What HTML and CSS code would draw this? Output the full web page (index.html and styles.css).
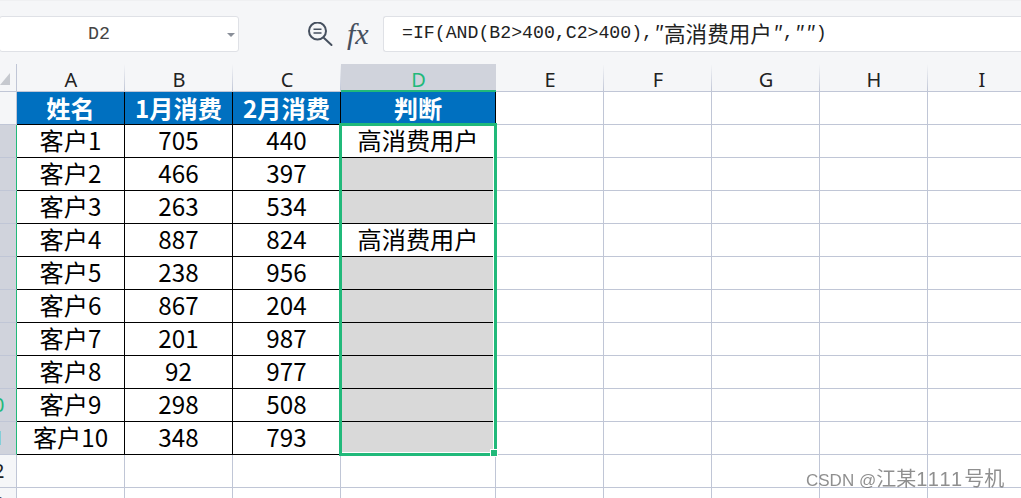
FILE: index.html
```html
<!DOCTYPE html>
<html lang="zh">
<head>
<meta charset="utf-8">
<title>高消费用户</title>
<link rel="stylesheet" href="styles.css">
</head>
<body>
<div class="toolbar">
  <div class="namebox"><span class="namebox-text">D2</span><span class="caret"></span></div>
  <div class="tools">
    <svg class="zoom-icon" width="26" height="26" viewBox="0 0 26 26" fill="none" stroke="#46505f" stroke-width="2"><circle cx="10.5" cy="9" r="8.5"/><path d="M6.5 7.2h8M6.5 11h8" stroke-width="1.5"/><path d="M17 16l7.5 7" stroke-linecap="round"/></svg>
    <span class="fx">fx</span>
  </div>
  <div class="formula">=IF(AND(B2&gt;400,C2&gt;400),<i class="q">"</i><span class="cjk">高消费用户</span><i class="q">"</i>,<i class="q">""</i>)</div>
</div>
<div class="sheet">
  <div class="grid">
    <div class="corner"><svg width="11" height="14" viewBox="0 0 11 14"><path d="M10 1v12H0z" fill="#c6c9cf"/></svg></div>
    <div class="col">A</div><div class="col">B</div><div class="col">C</div><div class="col col-sel">D</div><div class="col">E</div><div class="col">F</div><div class="col">G</div><div class="col">H</div><div class="col col-last">I</div>

    <div class="row"></div>
    <div class="cell data head">姓名</div><div class="cell data head">1月消费</div><div class="cell data head">2月消费</div><div class="cell data head">判断</div><div class="cell"></div><div class="cell"></div><div class="cell"></div><div class="cell"></div><div class="cell"></div>

    <div class="row row-sel"></div>
    <div class="cell data">客户1</div><div class="cell data">705</div><div class="cell data">440</div><div class="cell data">高消费用户</div><div class="cell"></div><div class="cell"></div><div class="cell"></div><div class="cell"></div><div class="cell"></div>

    <div class="row row-sel"></div>
    <div class="cell data">客户2</div><div class="cell data">466</div><div class="cell data">397</div><div class="cell data gray"></div><div class="cell"></div><div class="cell"></div><div class="cell"></div><div class="cell"></div><div class="cell"></div>

    <div class="row row-sel"></div>
    <div class="cell data">客户3</div><div class="cell data">263</div><div class="cell data">534</div><div class="cell data gray"></div><div class="cell"></div><div class="cell"></div><div class="cell"></div><div class="cell"></div><div class="cell"></div>

    <div class="row row-sel"></div>
    <div class="cell data">客户4</div><div class="cell data">887</div><div class="cell data">824</div><div class="cell data">高消费用户</div><div class="cell"></div><div class="cell"></div><div class="cell"></div><div class="cell"></div><div class="cell"></div>

    <div class="row row-sel"></div>
    <div class="cell data">客户5</div><div class="cell data">238</div><div class="cell data">956</div><div class="cell data gray"></div><div class="cell"></div><div class="cell"></div><div class="cell"></div><div class="cell"></div><div class="cell"></div>

    <div class="row row-sel"></div>
    <div class="cell data">客户6</div><div class="cell data">867</div><div class="cell data">204</div><div class="cell data gray"></div><div class="cell"></div><div class="cell"></div><div class="cell"></div><div class="cell"></div><div class="cell"></div>

    <div class="row row-sel"></div>
    <div class="cell data">客户7</div><div class="cell data">201</div><div class="cell data">987</div><div class="cell data gray"></div><div class="cell"></div><div class="cell"></div><div class="cell"></div><div class="cell"></div><div class="cell"></div>

    <div class="row row-sel"></div>
    <div class="cell data">客户8</div><div class="cell data">92</div><div class="cell data">977</div><div class="cell data gray"></div><div class="cell"></div><div class="cell"></div><div class="cell"></div><div class="cell"></div><div class="cell"></div>

    <div class="row row-sel"><span class="num num-sel">10</span></div>
    <div class="cell data">客户9</div><div class="cell data">298</div><div class="cell data">508</div><div class="cell data gray"></div><div class="cell"></div><div class="cell"></div><div class="cell"></div><div class="cell"></div><div class="cell"></div>

    <div class="row row-sel"><span class="num num-sel">11</span></div>
    <div class="cell data">客户10</div><div class="cell data">348</div><div class="cell data">793</div><div class="cell data gray"></div><div class="cell"></div><div class="cell"></div><div class="cell"></div><div class="cell"></div><div class="cell"></div>

    <div class="row"><span class="num">12</span></div>
    <div class="cell"></div><div class="cell"></div><div class="cell"></div><div class="cell"></div><div class="cell"></div><div class="cell"></div><div class="cell"></div><div class="cell"></div><div class="cell"></div>

    <div class="row"><span class="num">13</span></div>
    <div class="cell"></div><div class="cell"></div><div class="cell"></div><div class="cell"></div><div class="cell"></div><div class="cell"></div><div class="cell"></div><div class="cell"></div><div class="cell"></div>
  </div>
  <div class="selection"><span class="handle"></span></div>
</div>
<div class="watermark"><span class="wm-latin">CSDN @</span>江某<span class="wm-digits">1111</span>号机</div>
</body>
</html>
```
FILE: styles.css
```css
html, body {
  margin: 0;
  height: 498px;
  overflow: hidden;
  background: #fff;
}
body {
  position: relative;
  font-family: "Noto Sans CJK SC", "Noto Sans", sans-serif;
  color: #000;
}
.toolbar {
  height: 64px;
  box-sizing: border-box;
  display: flex;
  align-items: flex-start;
  padding-top: 16px;
  background: #f5f6f8;
  border-top: 1px solid #eff0f2;
}
.namebox {
  width: 240px;
  height: 36px;
  margin-top: -1px;
  margin-left: -1px;
  padding-top: 2px;
  box-sizing: border-box;
  flex: none;
  background: #fff;
  border: 1px solid #dfe1e6;
  border-radius: 3px;
  display: flex;
  align-items: center;
  font: 18.33px/30px "Liberation Mono", monospace;
  color: #444;
  position: relative;
}
.namebox-text {
  margin-left: 88px;
}
.caret {
  position: absolute;
  right: 3px;
  top: 16px;
  border-style: solid;
  border-width: 4px 4px 0;
  border-color: #8a8f99 transparent transparent;
}
.tools {
  width: 144px;
  flex: none;
  display: flex;
  align-items: center;
  height: 34px;
  padding-left: 68px;
  box-sizing: border-box;
  gap: 14px;
}
.zoom-icon {
  flex: none;
  margin-top: 2px;
}
.fx {
  font: italic 30px/34px "Liberation Serif", serif;
  color: #46505f;
}
.formula {
  flex: 1;
  height: 36px;
  margin-top: -1px;
  box-sizing: border-box;
  background: #fff;
  border: 1px solid #dfe1e6;
  border-right: 0;
  border-radius: 3px 0 0 3px;
  padding-left: 18px;
  font: 18.2px/32px "Liberation Mono", "Noto Sans CJK SC", monospace;
  color: #222;
  white-space: nowrap;
  display: flex;
  align-items: flex-start;
}
.q {
  font-style: italic;
}
.cjk {
  font: 21.6px/32px "Noto Sans CJK SC", sans-serif;
}
.sheet {
  position: relative;
}
.grid {
  display: grid;
  grid-template-columns: 17px 108px 108px 108px 155px 108px 108px 108px 108px 108px;
  grid-template-rows: 28px repeat(13, 33px);
  width: 1037px;
}
.corner {
  background: #f5f6f8;
  border-right: 1px solid #c0c6d6;
  border-bottom: 1px solid #c0c6d6;
  box-sizing: border-box;
  padding-top: 8px;
  line-height: 0;
}
.col {
  box-sizing: border-box;
  padding-top: 4px;
  background-color: #f5f6f8;
  background-image: linear-gradient(to bottom, #f5f6f8, #c0c6d6);
  background-size: 1px 100%;
  background-position: right top;
  background-repeat: no-repeat;
  border-bottom: 1px solid #c0c6d6;
  text-align: center;
  font: 20px/23px "Noto Sans", sans-serif;
  color: #222;
}
.col-sel {
  background: #d0d3dc;
  color: #21b97a;
  border-bottom: 2px solid #21b97a;
}
.row {
  box-sizing: border-box;
  background: #f5f6f8;
  border-right: 1px solid #c0c6d6;
  border-bottom: 1px solid #c0c6d6;
  overflow: hidden;
  display: flex;
  justify-content: center;
  align-items: center;
}
.row-sel {
  background: #d0d3dc;
  border-right: 1px solid #21b97a;
}
.num {
  flex: none;
  width: 40px;
  margin-left: -30px;
  text-align: center;
  font: 20px/30px "Noto Sans", sans-serif;
  color: #222;
}
.num-sel {
  color: #21b97a;
}
.cell {
  box-sizing: border-box;
  border-right: 1px solid #c0c6d6;
  border-bottom: 1px solid #c0c6d6;
  background: #fff;
}
.data {
  border-right-color: #000;
  border-bottom-color: #000;
  text-align: center;
  font-size: 24.2px;
  line-height: 30px;
  white-space: nowrap;
}
.head {
  background: #0070c0;
  color: #fff;
  font-weight: 700;
  line-height: 32px;
}
.gray {
  background: #d9d9d9;
}
.selection {
  position: absolute;
  left: 339px;
  top: 59px;
  width: 158px;
  height: 333px;
  box-sizing: border-box;
  border: 3px solid #21b97a;
  box-shadow: inset -1px -1px 0 #fff;
}
.handle {
  position: absolute;
  right: -4px;
  bottom: -4px;
  width: 6px;
  height: 6px;
  background: #21b97a;
  border: 1px solid #fff;
}
.watermark {
  position: absolute;
  left: 806px;
  top: 466px;
  font: 20px/24px "Noto Sans CJK SC", sans-serif;
  color: rgba(100, 100, 100, 0.72);
  white-space: nowrap;
  filter: blur(0.3px);
}
.wm-latin {
  font: 17px/24px "Liberation Sans", sans-serif;
}
.wm-digits {
  font: 20px/24px "Liberation Sans", sans-serif;
  letter-spacing: 2px;
}
```
